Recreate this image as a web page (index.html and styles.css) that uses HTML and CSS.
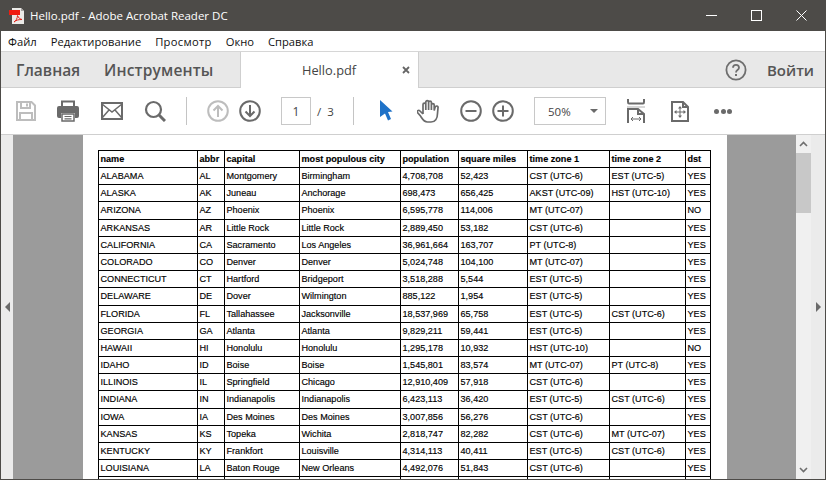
FILE: index.html
```html
<!DOCTYPE html>
<html>
<head>
    <title>Hello.pdf - Adobe Acrobat Reader DC</title>
    <link rel="stylesheet" href="styles.css">
</head>
<body>
    <div class="window">
        <div class="titlebar">
            <svg class="app-icon" width="18" height="18" viewBox="0 0 18 18">
                <path d="M3 1h9l3 3v13H3z" fill="#ecebe8"/>
                <path d="M12 1v3h3z" fill="#a8a6a3"/>
                <rect x="0" y="3" width="11" height="5" fill="#f01d12"/>
                <path d="M5 15c2-1 3.500-4 3.500-6.500C9.500 11 11 12 13 12.500c-3 0-6 .5-8 2.500z" fill="none" stroke="#e2231a" stroke-width="1"/>
            </svg>
            <span class="title-text">Hello.pdf - Adobe Acrobat Reader DC</span>
            <div class="win-controls">
                <svg width="11" height="11" viewBox="0 0 11 11"><path d="M0 5.500h11" stroke="#fff"/></svg>
                <svg width="11" height="11" viewBox="0 0 11 11"><rect x=".5" y=".5" width="10" height="10" fill="none" stroke="#fff"/></svg>
                <svg width="11" height="11" viewBox="0 0 11 11"><path d="M.5.5l10 10M10.500.5l-10 10" stroke="#fff"/></svg>
            </div>
        </div>

        <div class="menubar">
            <span>Файл</span>
            <span>Редактирование</span>
            <span class="menu-wide">Просмотр</span>
            <span>Окно</span>
            <span>Справка</span>
        </div>

        <div class="tabbar">
            <div class="nav-tabs">
                <span>Главная</span>
                <span class="nav-tools">Инструменты</span>
            </div>
            <div class="doc-tab">
                <span class="doc-name">Hello.pdf</span>
                <svg class="doc-close" width="8" height="8" viewBox="0 0 8 8"><path d="M1 1l6 6M7 1l-6 6" stroke="#666" stroke-width="1.800"/></svg>
            </div>
            <div class="tab-right">
                <svg width="22" height="22" viewBox="0 0 22 22">
                    <circle cx="11" cy="11" r="9.600" fill="none" stroke="#6e6e6e" stroke-width="1.800"/>
                    <path d="M8 8.800c0-4 6-4 6 0 0 2.400-3 2.200-3 4.600" fill="none" stroke="#6e6e6e" stroke-width="1.800"/>
                    <rect x="10" y="15" width="2" height="2" fill="#6e6e6e"/>
                </svg>
                <span class="signin">Войти</span>
            </div>
        </div>

        <div class="toolbar">
            <div class="tool-group first">
                <svg width="20" height="22" viewBox="0 0 20 22">
                    <path d="M1 2h14.500L19 5.500V20H1z" fill="none" stroke="#bdbdbd" stroke-width="2"/>
                    <path d="M5 2v6h9V2M4 20v-7h12v7" fill="none" stroke="#bdbdbd" stroke-width="2"/>
                    <rect x="10" y="3.500" width="2" height="3" fill="#bdbdbd"/>
                </svg>
                <svg width="23" height="22" viewBox="0 0 23 22">
                    <path d="M5 6V1.500h12V6" fill="none" stroke="#6a6a6a" stroke-width="2"/>
                    <path d="M2 6h18a2 2 0 0 1 2 2v8a2 2 0 0 1-2 2h-2v-5H4v5H2a2 2 0 0 1-2-2V8a2 2 0 0 1 2-2z" fill="#6a6a6a"/>
                    <path d="M5 14h12v7H5z" fill="#fff" stroke="#6a6a6a" stroke-width="1.500"/>
                    <path d="M7.500 16.500h7M7.500 18.800h7" stroke="#6a6a6a" stroke-width="1.200"/>
                </svg>
                <svg width="22" height="18" viewBox="0 0 22 18">
                    <rect x="1" y="1" width="20" height="16" fill="none" stroke="#6a6a6a" stroke-width="2"/>
                    <path d="M1 2l10 8 10-8M1 16l7-8M21 16l-7-8" fill="none" stroke="#6a6a6a" stroke-width="1.500"/>
                </svg>
                <svg width="22" height="22" viewBox="0 0 22 22">
                    <circle cx="9.500" cy="9.500" r="7.500" fill="none" stroke="#6a6a6a" stroke-width="2.200"/>
                    <path d="M15 15l6 6" stroke="#6a6a6a" stroke-width="3"/>
                </svg>
            </div>
            <div class="tool-sep"></div>
            <div class="tool-group page-nav">
                <svg width="22" height="22" viewBox="0 0 22 22">
                    <circle cx="11" cy="11" r="9.800" fill="none" stroke="#bdbdbd" stroke-width="2"/>
                    <path d="M11 17V6M6.500 10.500L11 6l4.500 4.500" fill="none" stroke="#bdbdbd" stroke-width="2"/>
                </svg>
                <svg width="22" height="22" viewBox="0 0 22 22">
                    <circle cx="11" cy="11" r="9.800" fill="none" stroke="#6a6a6a" stroke-width="2"/>
                    <path d="M11 5v11M6.500 11.500L11 16l4.500-4.500" fill="none" stroke="#6a6a6a" stroke-width="2"/>
                </svg>
            </div>
            <div class="page-box">1</div>
            <span class="page-total">/&nbsp; 3</span>
            <div class="tool-sep second"></div>
            <svg class="cursor-icon" width="13" height="22" viewBox="0 0 13 22">
                <path d="M0 0l12.500 11.500-4.500.5 3 7-3 1.500-3-7L0 17z" fill="#1f72c8"/>
            </svg>
            <svg class="hand-icon" width="23" height="24" viewBox="0 0 23 24">
                <path d="M6 15V5.500a1.400 1.400 0 0 1 2.800 0V11M8.800 11V3a1.400 1.400 0 0 1 2.800 0v8M11.600 11V3.500a1.400 1.400 0 0 1 2.800 0V11M14.400 11V6a1.400 1.400 0 0 1 2.800 0v5.500l.8-3c1-2.500 3.500-1.500 3 .5l-.5 5.500c0 5-2.500 8.500-6.500 8.500h-3.500c-4 0-5-3-7-6l-3-3.500c-1-1.500 1-3 2.500-1.500L6 15" fill="none" stroke="#6a6a6a" stroke-width="1.700"/>
            </svg>
            <div class="tool-group zoom-btns">
                <svg width="22" height="22" viewBox="0 0 22 22">
                    <circle cx="11" cy="11" r="9.800" fill="none" stroke="#6a6a6a" stroke-width="2"/>
                    <path d="M5.500 11h11" stroke="#6a6a6a" stroke-width="2"/>
                </svg>
                <svg width="22" height="22" viewBox="0 0 22 22">
                    <circle cx="11" cy="11" r="9.800" fill="none" stroke="#6a6a6a" stroke-width="2"/>
                    <path d="M5.500 11h11M11 5.500v11" stroke="#6a6a6a" stroke-width="2"/>
                </svg>
            </div>
            <div class="zoom-box">
                <span>50%</span>
                <i class="caret"></i>
            </div>
            <svg class="fit-icon" width="18" height="24" viewBox="0 0 18 24">
                <path d="M1 0v3c0 1 0 1.500 1 1.500h14c1 0 1-.5 1-1.500V0" fill="none" stroke="#6a6a6a" stroke-width="2"/>
                <rect x="0" y="7" width="18" height="2" fill="#d8d8d8"/>
                <path d="M1 24V10h10l6 5v9M11 10v5h6" fill="none" stroke="#6a6a6a" stroke-width="2"/>
                <path d="M4 20h10M6 18l-2 2 2 2M12 18l2 2-2 2" fill="none" stroke="#6a6a6a" stroke-width="1"/>
            </svg>
            <svg class="rotate-icon" width="18" height="21" viewBox="0 0 18 21">
                <path d="M1 1h11l5 5v14H1zM12 1v5h5" fill="none" stroke="#6a6a6a" stroke-width="2"/>
                <path d="M9 6v10M4 11h10" stroke="#6a6a6a" stroke-width="1"/>
                <path d="M9 5l2 2.500H7zM9 17l2-2.500H7zM3 11l2.500-2v4zM15 11l-2.500-2v4z" fill="#6a6a6a"/>
            </svg>
            <div class="more-dots"><i></i><i></i><i></i></div>
        </div>

        <div class="workarea">
            <div class="side-panel left"><i class="arrow-left"></i></div>
            <div class="canvas">
                <div class="pdf-page">
                    <table class="data-table">
                        <colgroup>
                            <col class="c-name"><col class="c-abbr"><col class="c-capital"><col class="c-city"><col class="c-pop"><col class="c-sq"><col class="c-tz1"><col class="c-tz2"><col class="c-dst">
                        </colgroup>
                        <tr class="head"><td>name</td><td>abbr</td><td>capital</td><td>most populous city</td><td>population</td><td>square miles</td><td>time zone 1</td><td>time zone 2</td><td>dst</td></tr>
                        <tr><td>ALABAMA</td><td>AL</td><td>Montgomery</td><td>Birmingham</td><td>4,708,708</td><td>52,423</td><td>CST (UTC-6)</td><td>EST (UTC-5)</td><td>YES</td></tr>
                        <tr><td>ALASKA</td><td>AK</td><td>Juneau</td><td>Anchorage</td><td>698,473</td><td>656,425</td><td>AKST (UTC-09)</td><td>HST (UTC-10)</td><td>YES</td></tr>
                        <tr class="tall"><td>ARIZONA</td><td>AZ</td><td>Phoenix</td><td>Phoenix</td><td>6,595,778</td><td>114,006</td><td>MT (UTC-07)</td><td></td><td>NO</td></tr>
                        <tr><td>ARKANSAS</td><td>AR</td><td>Little Rock</td><td>Little Rock</td><td>2,889,450</td><td>53,182</td><td>CST (UTC-6)</td><td></td><td>YES</td></tr>
                        <tr><td>CALIFORNIA</td><td>CA</td><td>Sacramento</td><td>Los Angeles</td><td>36,961,664</td><td>163,707</td><td>PT (UTC-8)</td><td></td><td>YES</td></tr>
                        <tr><td>COLORADO</td><td>CO</td><td>Denver</td><td>Denver</td><td>5,024,748</td><td>104,100</td><td>MT (UTC-07)</td><td></td><td>YES</td></tr>
                        <tr><td>CONNECTICUT</td><td>CT</td><td>Hartford</td><td>Bridgeport</td><td>3,518,288</td><td>5,544</td><td>EST (UTC-5)</td><td></td><td>YES</td></tr>
                        <tr class="tall"><td>DELAWARE</td><td>DE</td><td>Dover</td><td>Wilmington</td><td>885,122</td><td>1,954</td><td>EST (UTC-5)</td><td></td><td>YES</td></tr>
                        <tr><td>FLORIDA</td><td>FL</td><td>Tallahassee</td><td>Jacksonville</td><td>18,537,969</td><td>65,758</td><td>EST (UTC-5)</td><td>CST (UTC-6)</td><td>YES</td></tr>
                        <tr><td>GEORGIA</td><td>GA</td><td>Atlanta</td><td>Atlanta</td><td>9,829,211</td><td>59,441</td><td>EST (UTC-5)</td><td></td><td>YES</td></tr>
                        <tr><td>HAWAII</td><td>HI</td><td>Honolulu</td><td>Honolulu</td><td>1,295,178</td><td>10,932</td><td>HST (UTC-10)</td><td></td><td>NO</td></tr>
                        <tr><td>IDAHO</td><td>ID</td><td>Boise</td><td>Boise</td><td>1,545,801</td><td>83,574</td><td>MT (UTC-07)</td><td>PT (UTC-8)</td><td>YES</td></tr>
                        <tr><td>ILLINOIS</td><td>IL</td><td>Springfield</td><td>Chicago</td><td>12,910,409</td><td>57,918</td><td>CST (UTC-6)</td><td></td><td>YES</td></tr>
                        <tr class="tall"><td>INDIANA</td><td>IN</td><td>Indianapolis</td><td>Indianapolis</td><td>6,423,113</td><td>36,420</td><td>EST (UTC-5)</td><td>CST (UTC-6)</td><td>YES</td></tr>
                        <tr><td>IOWA</td><td>IA</td><td>Des Moines</td><td>Des Moines</td><td>3,007,856</td><td>56,276</td><td>CST (UTC-6)</td><td></td><td>YES</td></tr>
                        <tr><td>KANSAS</td><td>KS</td><td>Topeka</td><td>Wichita</td><td>2,818,747</td><td>82,282</td><td>CST (UTC-6)</td><td>MT (UTC-07)</td><td>YES</td></tr>
                        <tr><td>KENTUCKY</td><td>KY</td><td>Frankfort</td><td>Louisville</td><td>4,314,113</td><td>40,411</td><td>EST (UTC-5)</td><td>CST (UTC-6)</td><td>YES</td></tr>
                        <tr><td>LOUISIANA</td><td>LA</td><td>Baton Rouge</td><td>New Orleans</td><td>4,492,076</td><td>51,843</td><td>CST (UTC-6)</td><td></td><td>YES</td></tr>
                        <tr><td></td><td></td><td></td><td></td><td></td><td></td><td></td><td></td><td></td></tr>
                    </table>
                </div>
            </div>
            <div class="scrollbar">
                <svg class="scroll-arrow" width="9" height="6" viewBox="0 0 9 6"><path d="M1 5l3.500-3.500L8 5" fill="none" stroke="#6e6e6e" stroke-width="1.600"/></svg>
                <div class="scroll-track"><div class="scroll-thumb"></div></div>
                <svg class="scroll-arrow" width="9" height="6" viewBox="0 0 9 6"><path d="M1 1l3.500 3.500L8 1" fill="none" stroke="#6e6e6e" stroke-width="1.600"/></svg>
            </div>
            <div class="side-panel right"><i class="arrow-right"></i></div>
        </div>
    </div>
</body>
</html>
```

FILE: styles.css
```css
html, body {
    margin: 0;
    height: 100%;
    overflow: hidden;
}
body {
    font-family: "Open Sans", "Noto Sans", sans-serif;
    background: #fff;
}
.window {
    box-sizing: border-box;
    width: 826px;
    height: 480px;
    display: flex;
    flex-direction: column;
    border: 1px solid #4d4b48;
    border-top: 0;
    overflow: hidden;
}
.titlebar {
    height: 31px;
    flex: none;
    background: #4d4b48;
    display: flex;
    align-items: center;
    color: #fff;
    font-size: 11.5px;
    padding-left: 8px;
}
.app-icon {
    margin-right: 3px;
}
.win-controls {
    margin-left: auto;
    display: flex;
    gap: 34px;
    padding-right: 18px;
}
.menubar {
    height: 20px;
    flex: none;
    display: flex;
    align-items: center;
    gap: 14px;
    padding-left: 7px;
    font-size: 11.2px;
    color: #111;
    background: #fff;
}
.menu-wide {
    letter-spacing: 0.3px;
}
.tabbar {
    height: 37px;
    flex: none;
    display: flex;
    box-sizing: border-box;
    border-top: 1px solid #d6d6d6;
    border-bottom: 1px solid #cfcfcf;
    background: #e8e8e8;
}
.nav-tabs {
    width: 239px;
    display: flex;
    align-items: center;
    gap: 24px;
    padding-left: 15px;
    box-sizing: border-box;
    font-size: 15.500px;
    font-weight: 600;
    color: #555;
}
.nav-tools {
    letter-spacing: 0.18px;
}
.doc-tab {
    width: 179px;
    height: 36px;
    box-sizing: border-box;
    background: #fff;
    border-left: 1px solid #cfcfcf;
    border-right: 1px solid #cfcfcf;
    display: flex;
    align-items: center;
    font-size: 12.800px;
    color: #444;
}
.doc-name {
    margin-left: 61px;
}
.doc-close {
    margin-left: auto;
    margin-right: 8px;
}
.tab-right {
    margin-left: auto;
    display: flex;
    align-items: center;
    gap: 20px;
    padding-right: 11px;
}
.signin {
    font-size: 15px;
    font-weight: 600;
    color: #555;
}
.toolbar {
    height: 47px;
    flex: none;
    box-sizing: border-box;
    border-bottom: 1px solid #cfcfcf;
    background: #fff;
    display: flex;
    align-items: center;
    padding-left: 15px;
}
.tool-group {
    display: flex;
    align-items: center;
}
.tool-group.first {
    gap: 21px;
}
.tool-sep {
    width: 1px;
    height: 28px;
    background: #c4c4c4;
    margin-left: 20px;
}
.tool-sep.second {
    margin-left: 19px;
}
.page-nav {
    gap: 10px;
    margin-left: 20px;
}
.page-box {
    box-sizing: border-box;
    width: 30px;
    height: 28px;
    margin-left: 20px;
    border: 1px solid #c8c8c8;
    display: flex;
    align-items: center;
    justify-content: center;
    font-size: 12px;
    color: #444;
}
.page-total {
    width: 17px;
    margin-left: 6px;
    font-size: 11.500px;
    color: #444;
    white-space: nowrap;
}
.cursor-icon {
    margin-left: 26px;
}
.hand-icon {
    margin-left: 24px;
}
.zoom-btns {
    gap: 10px;
    margin-left: 20px;
}
.zoom-box {
    box-sizing: border-box;
    width: 72px;
    height: 28px;
    margin-left: 20px;
    border: 1px solid #c8c8c8;
    display: flex;
    align-items: center;
    padding-left: 13px;
    font-size: 11.500px;
    color: #444;
}
.caret {
    margin-left: auto;
    margin-right: 7px;
    border-left: 4px solid transparent;
    border-right: 4px solid transparent;
    border-top: 4px solid #6a6a6a;
}
.fit-icon {
    margin-left: 21px;
}
.rotate-icon {
    margin-left: 26px;
}
.more-dots {
    display: flex;
    gap: 1.500px;
    margin-left: 25px;
}
.more-dots i {
    width: 5px;
    height: 5px;
    border-radius: 50%;
    background: #6a6a6a;
}
.workarea {
    flex: 1;
    min-height: 0;
    display: flex;
    background: #e8e8e8;
}
.side-panel {
    flex: none;
    display: flex;
    align-items: center;
    justify-content: center;
    background: #ebebeb;
}
.side-panel.left {
    width: 12px;
}
.side-panel.right {
    width: 14px;
}
.arrow-left {
    border-top: 5px solid transparent;
    border-bottom: 5px solid transparent;
    border-right: 5px solid #6a6a6a;
}
.arrow-right {
    border-top: 5px solid transparent;
    border-bottom: 5px solid transparent;
    border-left: 5px solid #6a6a6a;
}
.canvas {
    flex: 1;
    background: #9b9b9b;
    display: flex;
    padding-left: 70px;
    min-width: 0;
}
.pdf-page {
    width: 644px;
    background: #fff;
    box-sizing: border-box;
    padding: 15px 0 0 15px;
    overflow: hidden;
}
.scrollbar {
    width: 15px;
    flex: none;
    background: #f0f0f0;
    display: flex;
    flex-direction: column;
    align-items: center;
}
.scroll-arrow {
    flex: none;
    margin: 6px 0;
}
.scroll-track {
    flex: 1;
    width: 100%;
}
.scroll-thumb {
    height: 60px;
    background: #c8c8c8;
}
.data-table {
    border-collapse: collapse;
    table-layout: fixed;
    width: 612px;
    font-family: "Liberation Sans", Arial, sans-serif;
    font-size: 9.100px;
    color: #000;
    -webkit-text-stroke: 0.15px #000;
}
.data-table td {
    border: 1px solid #000;
    height: 17px;
    padding: 0 0 0 1.500px;
    box-sizing: border-box;
    white-space: nowrap;
    overflow: hidden;
}
.data-table .tall td {
    height: 18px;
    padding-bottom: 2px;
}
.head td {
    font-weight: bold;
}
.c-name { width: 99px; }
.c-abbr { width: 27px; }
.c-capital { width: 75px; }
.c-city { width: 101px; }
.c-pop { width: 58px; }
.c-sq { width: 69px; }
.c-tz1 { width: 82px; }
.c-tz2 { width: 76px; }
.c-dst { width: 25px; }
```
